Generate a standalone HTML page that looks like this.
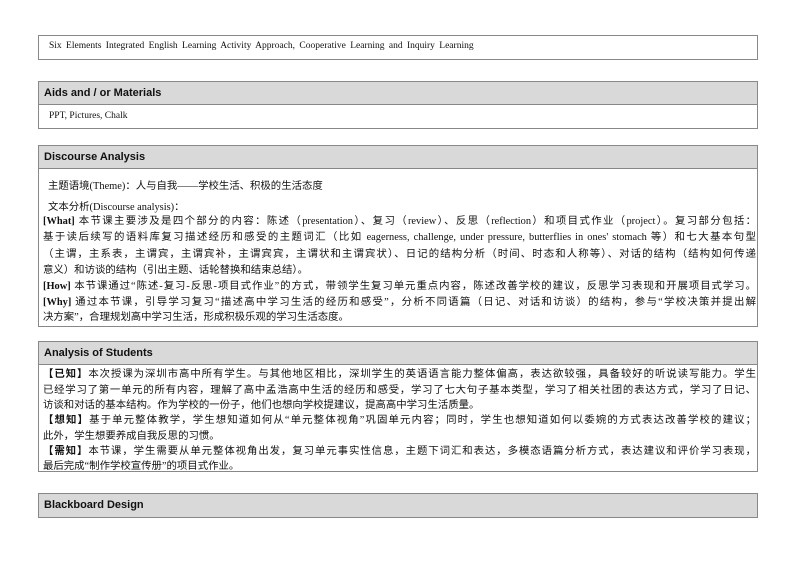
<!DOCTYPE html>
<html><head><meta charset="utf-8"><style>
body{margin:0;width:794px;height:561px;background:#fff;font-family:"Liberation Serif","Noto Serif CJK SC","Noto Sans CJK SC",serif;color:#111;position:relative;overflow:hidden}
.box{position:absolute;left:38px;width:720px;border:1px solid #888;box-sizing:border-box}
.hd{background:#d9d9d9;font-family:"Liberation Sans",sans-serif;font-weight:bold;font-size:11px;padding-left:5px;box-sizing:border-box;border-bottom:1px solid #888}
.t{position:absolute;left:44px;font-size:10px;white-space:nowrap}
.j{position:absolute;left:43px;width:713px;font-size:10.4px;text-align:justify;text-align-last:justify;white-space:nowrap;overflow:hidden;font-family:"Liberation Serif","Noto Sans CJK SC",serif}
.l{text-align-last:left}
b{font-weight:bold}
</style></head><body>
<div class="box" style="top:35px;height:25px"></div>
<div class="t" style="top:41px;left:49px;font-size:9.5px;word-spacing:2px">Six Elements Integrated English Learning Activity Approach, Cooperative Learning and Inquiry Learning</div>

<div class="box" style="top:81px;height:48px"><div class="hd" style="height:23px;line-height:22px">Aids and / or Materials</div></div>
<div class="t" style="top:111px;left:49px;font-size:9.5px">PPT, Pictures, Chalk</div>

<div class="box" style="top:145px;height:182px"><div class="hd" style="height:23px;line-height:22px">Discourse Analysis</div></div>
<div class="j l" style="top:177px;left:48px">主题语境(Theme)：人与自我——学校生活、积极的生活态度</div>
<div class="j l" style="top:198px;left:48px">文本分析(Discourse analysis)：</div>
<div class="j" style="top:212px"><b>[What]</b> 本节课主要涉及是四个部分的内容：陈述（presentation）、复习（review）、反思（reflection）和项目式作业（project）。复习部分包括：</div>
<div class="j" style="top:228px">基于读后续写的语料库复习描述经历和感受的主题词汇（比如 eagerness, challenge, under pressure, butterflies in ones' stomach 等）和七大基本句型</div>
<div class="j" style="top:245px">（主谓，主系表，主谓宾，主谓宾补，主谓宾宾，主谓状和主谓宾状）、日记的结构分析（时间、时态和人称等）、对话的结构（结构如何传递</div>
<div class="j l" style="top:261px">意义）和访谈的结构（引出主题、话轮替换和结束总结）。</div>
<div class="j" style="top:277px"><b>[How]</b> 本节课通过“陈述-复习-反思-项目式作业”的方式，带领学生复习单元重点内容，陈述改善学校的建议，反思学习表现和开展项目式学习。</div>
<div class="j" style="top:293px"><b>[Why]</b> 通过本节课，引导学习复习“描述高中学习生活的经历和感受”，分析不同语篇（日记、对话和访谈）的结构，参与“学校决策并提出解</div>
<div class="j l" style="top:308px">决方案”，合理规划高中学习生活，形成积极乐观的学习生活态度。</div>

<div class="box" style="top:341px;height:131px"><div class="hd" style="height:23px;line-height:22px">Analysis of Students</div></div>
<div class="j" style="top:365px"><b>【已知】</b>本次授课为深圳市高中所有学生。与其他地区相比，深圳学生的英语语言能力整体偏高，表达欲较强，具备较好的听说读写能力。学生</div>
<div class="j" style="top:381px">已经学习了第一单元的所有内容，理解了高中孟浩高中生活的经历和感受，学习了七大句子基本类型，学习了相关社团的表达方式，学习了日记、</div>
<div class="j l" style="top:396px">访谈和对话的基本结构。作为学校的一份子，他们也想向学校提建议，提高高中学习生活质量。</div>
<div class="j" style="top:411px"><b>【想知】</b>基于单元整体教学，学生想知道如何从“单元整体视角”巩固单元内容；同时，学生也想知道如何以委婉的方式表达改善学校的建议；</div>
<div class="j l" style="top:427px">此外，学生想要养成自我反思的习惯。</div>
<div class="j" style="top:442px"><b>【需知】</b>本节课，学生需要从单元整体视角出发，复习单元事实性信息，主题下词汇和表达，多模态语篇分析方式，表达建议和评价学习表现，</div>
<div class="j l" style="top:457px">最后完成“制作学校宣传册”的项目式作业。</div>

<div class="box" style="top:493px;height:25px"><div class="hd" style="height:23px;line-height:23px;border-bottom:none">Blackboard Design</div></div>
</body></html>
